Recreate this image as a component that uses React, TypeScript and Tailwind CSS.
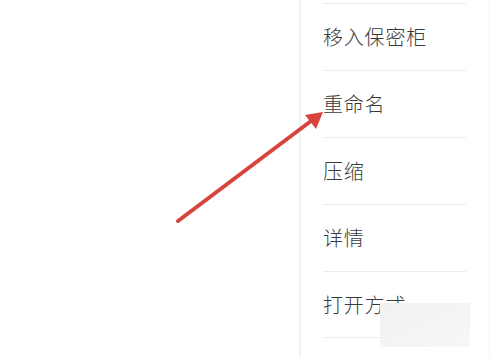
import React from "react";

const items = ["移入保密柜", "重命名", "压缩", "详情", "打开方式"];

export default function App() {
  return (
    <div
      className="relative w-[497px] h-[358px] bg-white overflow-hidden flex"
      style={{ fontFamily: '"Noto Sans CJK SC", "Noto Sans", sans-serif' }}
    >
      <div className="w-[299px] shrink-0" />
      <div className="w-[191px] shrink-0 h-full border-l-2 border-r border-[#f3f3f3] pl-[22px] pr-[23px] pt-[3px]">
        {items.map((t, i) => (
          <div
            key={t}
            className={`h-[67px] flex items-center border-t border-[#ececec] text-[20px] font-light text-[#3a3a3a] tracking-[0.8px] ${
              i === items.length - 1 ? "border-b" : ""
            }`}
          >
            {t}
          </div>
        ))}
      </div>
      <svg
        className="absolute left-0 top-0 pointer-events-none"
        width="497"
        height="358"
        viewBox="0 0 497 358"
      >
        <line
          x1="178"
          y1="221"
          x2="311"
          y2="121"
          stroke="#d8433f"
          strokeWidth="4"
          strokeLinecap="round"
        />
        <polygon points="323,112 305,115 316,129" fill="#d8433f" />
      </svg>
      <div className="absolute left-[380px] top-[303px] w-[90px] h-[44px] bg-gradient-to-br from-[#f1f1f1] to-[#f7f7f7]" />
    </div>
  );
}
